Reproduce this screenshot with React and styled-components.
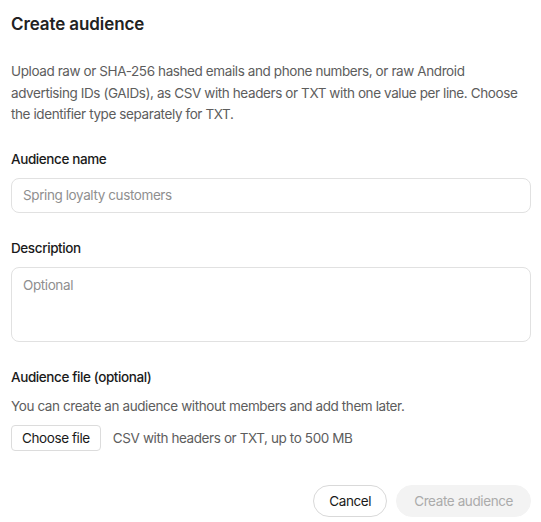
import React from 'react';
import styled, { createGlobalStyle } from 'styled-components';

const GlobalStyle = createGlobalStyle`
  * { box-sizing: border-box; }
  body {
    margin: 0;
    background: #fff;
    font-family: Inter, "Noto Sans", sans-serif;
    color: #0d0d0d;
  }
`;

const Dialog = styled.div`
  width: 541px;
  padding: 12px 10px 0 11px;
  display: flex;
  flex-direction: column;
  font-size: 13.5px;
  letter-spacing: -0.4px;
`;

const Title = styled.h2`
  margin: 0;
  font-size: 17px;
  line-height: 24px;
  font-weight: 600;
  letter-spacing: -0.1px;
  color: #222;
`;

const Intro = styled.p`
  margin: 25px 0 0;
  line-height: 21.5px;
  color: #5d5d5d;
`;

const Field = styled.div`
  display: flex;
  flex-direction: column;
  gap: 9px;
  margin-top: ${(p) => p.$top}px;
`;

const Label = styled.label`
  line-height: 20px;
  font-weight: 500;
  color: #1a1a1a;
`;

const Input = styled.input`
  height: 35px;
  width: 100%;
  border: 1px solid #e1e1e1;
  border-radius: 8px;
  padding: 0 11px;
  font: inherit;
  letter-spacing: inherit;
  color: #0d0d0d;
  outline: none;
  &::placeholder { color: #8f8f8f; }
`;

const TextArea = styled.textarea`
  height: 75px;
  width: 100%;
  border: 1px solid #e1e1e1;
  border-radius: 8px;
  padding: 7px 11px;
  font: inherit;
  letter-spacing: inherit;
  line-height: 20px;
  resize: none;
  outline: none;
  &::placeholder { color: #8f8f8f; }
`;

const Hint = styled.div`
  line-height: 20px;
  color: #5d5d5d;
`;

const FileRow = styled.div`
  display: flex;
  align-items: center;
  gap: 12px;
`;

const FileButton = styled.button`
  height: 26px;
  padding: 0 10px;
  border: 1px solid #dcdcdc;
  border-radius: 4px;
  background: #fff;
  font: inherit;
  letter-spacing: inherit;
  color: #1a1a1a;
`;

const Footer = styled.div`
  display: flex;
  justify-content: flex-end;
  gap: 9px;
  margin-top: 34px;
`;

const PillButton = styled.button`
  height: 32px;
  padding: 0 ${(p) => (p.$primary ? 17 : 15)}px;
  border-radius: 16px;
  font: inherit;
  letter-spacing: inherit;
  border: 1px solid ${(p) => (p.$primary ? '#f3f3f3' : '#d9d9d9')};
  background: ${(p) => (p.$primary ? '#f3f3f3' : '#fff')};
  color: ${(p) => (p.$primary ? '#ababab' : '#1a1a1a')};
`;

export default function App() {
  return (
    <>
      <GlobalStyle />
      <Dialog>
        <Title>Create audience</Title>
        <Intro>
          Upload raw or SHA-256 hashed emails and phone numbers, or raw Android
          advertising IDs (GAIDs), as CSV with headers or TXT with one value per line.
          Choose the identifier type separately for TXT.
        </Intro>

        <Field $top={23}>
          <Label>Audience name</Label>
          <Input placeholder="Spring loyalty customers" />
        </Field>

        <Field $top={25}>
          <Label>Description</Label>
          <TextArea placeholder="Optional" />
        </Field>

        <Field $top={25}>
          <Label>Audience file (optional)</Label>
          <Hint>You can create an audience without members and add them later.</Hint>
          <FileRow>
            <FileButton>Choose file</FileButton>
            <Hint>CSV with headers or TXT, up to 500 MB</Hint>
          </FileRow>
        </Field>

        <Footer>
          <PillButton>Cancel</PillButton>
          <PillButton $primary disabled>Create audience</PillButton>
        </Footer>
      </Dialog>
    </>
  );
}
